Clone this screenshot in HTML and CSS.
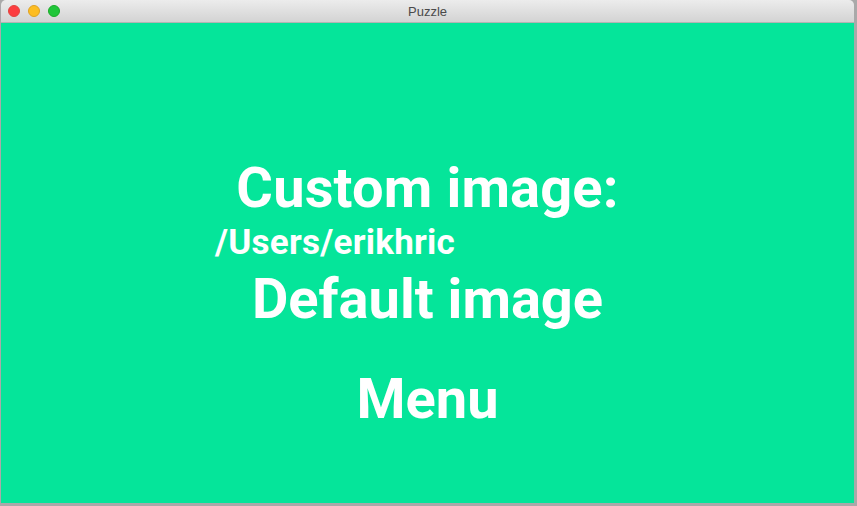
FILE: index.html
```html
<!DOCTYPE html>
<html>
<head>
<meta charset="utf-8">
<title>Puzzle</title>
<link rel="stylesheet" href="styles.css">
</head>
<body>
<div class="window">
  <div class="titlebar">
    <div class="lights">
      <span class="light red"></span>
      <span class="light yellow"></span>
      <span class="light green"></span>
    </div>
    <div class="title">Puzzle</div>
  </div>
  <div class="content">
    <div class="line custom">Custom image:</div>
    <div class="line path">/Users/erikhric</div>
    <div class="line default">Default image</div>
    <div class="line menu">Menu</div>
  </div>
</div>
</body>
</html>
```
FILE: styles.css
```css
html, body {
  margin: 0;
  padding: 0;
}
body {
  width: 857px;
  height: 506px;
  background: #a9a9a9;
  overflow: hidden;
}
.window {
  width: 853px;
  height: 503px;
  margin-left: 1px;
  display: flex;
  flex-direction: column;
  border-radius: 5px 5px 0 0;
  overflow: hidden;
}
.titlebar {
  height: 22px;
  flex: none;
  position: relative;
  background: linear-gradient(#ececec, #d3d3d3);
  border-bottom: 1px solid #b4b4b4;
  display: flex;
  align-items: center;
  justify-content: center;
}
.lights {
  position: absolute;
  left: 7px;
  top: 5px;
  display: flex;
  gap: 8px;
}
.light {
  width: 12px;
  height: 12px;
  border-radius: 50%;
  box-sizing: border-box;
}
.red { background: #fc3d40; border: 1px solid #e0443e; }
.yellow { background: #fdbd22; border: 1px solid #dea123; }
.green { background: #20c63a; border: 1px solid #1aab29; }
.title {
  font-family: "Liberation Sans", Arial, sans-serif;
  font-size: 13px;
  color: #4a4a4a;
}
.content {
  flex: 1;
  background: #05e59a;
  color: #ffffff;
  font-family: Roboto, "Noto Sans", sans-serif;
  font-weight: 700;
  display: flex;
  flex-direction: column;
  padding-top: 135px;
}
.line {
  white-space: nowrap;
}
.custom {
  font-size: 56px;
  line-height: 60px;
  letter-spacing: 0.15px;
  text-align: center;
}
.path {
  font-size: 35px;
  line-height: 40px;
  letter-spacing: 0.25px;
  margin-top: 5px;
  padding-left: 214px;
}
.default {
  font-size: 56px;
  line-height: 60px;
  margin-top: 6px;
  text-align: center;
}
.menu {
  font-size: 56px;
  line-height: 60px;
  margin-top: 40px;
  text-align: center;
}
```
